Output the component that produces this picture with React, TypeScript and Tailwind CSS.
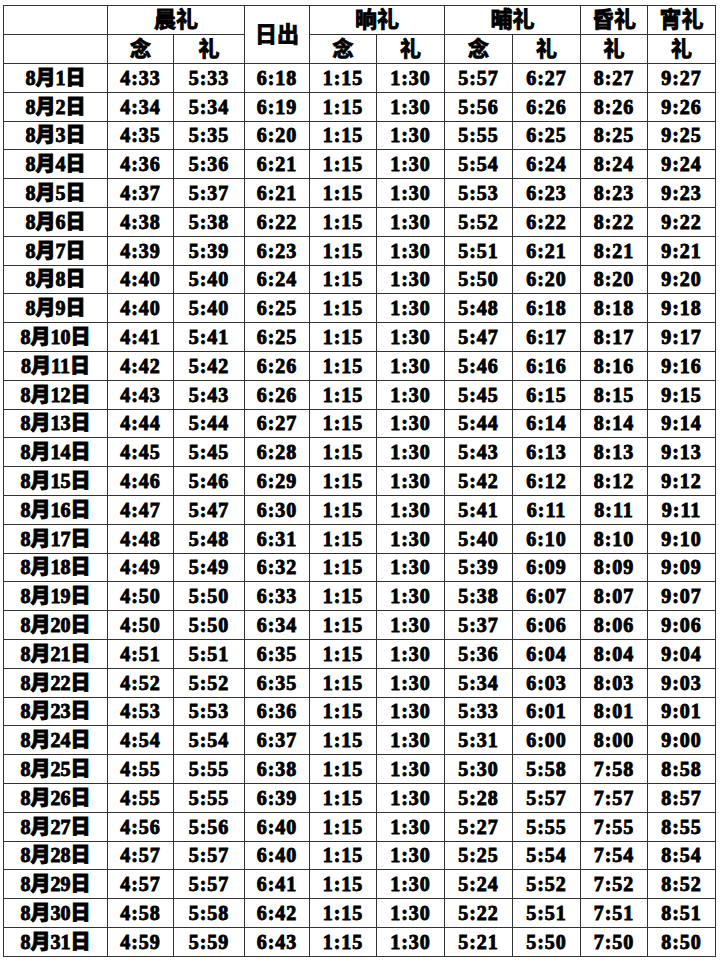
const rows: string[][] = [
  ["4:33", "5:33", "6:18", "5:57", "6:27", "8:27", "9:27"],
  ["4:34", "5:34", "6:19", "5:56", "6:26", "8:26", "9:26"],
  ["4:35", "5:35", "6:20", "5:55", "6:25", "8:25", "9:25"],
  ["4:36", "5:36", "6:21", "5:54", "6:24", "8:24", "9:24"],
  ["4:37", "5:37", "6:21", "5:53", "6:23", "8:23", "9:23"],
  ["4:38", "5:38", "6:22", "5:52", "6:22", "8:22", "9:22"],
  ["4:39", "5:39", "6:23", "5:51", "6:21", "8:21", "9:21"],
  ["4:40", "5:40", "6:24", "5:50", "6:20", "8:20", "9:20"],
  ["4:40", "5:40", "6:25", "5:48", "6:18", "8:18", "9:18"],
  ["4:41", "5:41", "6:25", "5:47", "6:17", "8:17", "9:17"],
  ["4:42", "5:42", "6:26", "5:46", "6:16", "8:16", "9:16"],
  ["4:43", "5:43", "6:26", "5:45", "6:15", "8:15", "9:15"],
  ["4:44", "5:44", "6:27", "5:44", "6:14", "8:14", "9:14"],
  ["4:45", "5:45", "6:28", "5:43", "6:13", "8:13", "9:13"],
  ["4:46", "5:46", "6:29", "5:42", "6:12", "8:12", "9:12"],
  ["4:47", "5:47", "6:30", "5:41", "6:11", "8:11", "9:11"],
  ["4:48", "5:48", "6:31", "5:40", "6:10", "8:10", "9:10"],
  ["4:49", "5:49", "6:32", "5:39", "6:09", "8:09", "9:09"],
  ["4:50", "5:50", "6:33", "5:38", "6:07", "8:07", "9:07"],
  ["4:50", "5:50", "6:34", "5:37", "6:06", "8:06", "9:06"],
  ["4:51", "5:51", "6:35", "5:36", "6:04", "8:04", "9:04"],
  ["4:52", "5:52", "6:35", "5:34", "6:03", "8:03", "9:03"],
  ["4:53", "5:53", "6:36", "5:33", "6:01", "8:01", "9:01"],
  ["4:54", "5:54", "6:37", "5:31", "6:00", "8:00", "9:00"],
  ["4:55", "5:55", "6:38", "5:30", "5:58", "7:58", "8:58"],
  ["4:55", "5:55", "6:39", "5:28", "5:57", "7:57", "8:57"],
  ["4:56", "5:56", "6:40", "5:27", "5:55", "7:55", "8:55"],
  ["4:57", "5:57", "6:40", "5:25", "5:54", "7:54", "8:54"],
  ["4:57", "5:57", "6:41", "5:24", "5:52", "7:52", "8:52"],
  ["4:58", "5:58", "6:42", "5:22", "5:51", "7:51", "8:51"],
  ["4:59", "5:59", "6:43", "5:21", "5:50", "7:50", "8:50"],
];

// 晌礼 is the same every day
const noonNian = "1:15";
const noonLi = "1:30";

const cell = "border border-[#333] text-center align-middle p-0 leading-none";
const num = cell + " tracking-[1px]";

export default function App() {
  return (
    <div className="bg-white w-[720px] h-[967px] pt-[5px] pl-[3px] font-['Liberation_Serif','Noto_Sans_CJK_SC',serif] font-bold text-black [-webkit-text-stroke:0.9px_black]">
      <table className="table-fixed border-collapse w-[712px]">
        <colgroup>
          <col className="w-[104px]" />
          <col className="w-[66px]" />
          <col className="w-[71px]" />
          <col className="w-[65px]" />
          <col className="w-[67px]" />
          <col className="w-[68px]" />
          <col className="w-[68px]" />
          <col className="w-[68px]" />
          <col className="w-[67px]" />
          <col className="w-[68px]" />
        </colgroup>
        <thead>
          <tr className="h-[29px] text-[22px] font-black">
            <th className={cell}></th>
            <th className={cell} colSpan={2}>晨礼</th>
            <th className={cell} rowSpan={2}>日出</th>
            <th className={cell} colSpan={2}>晌礼</th>
            <th className={cell} colSpan={2}>晡礼</th>
            <th className={cell}>昏礼</th>
            <th className={cell}>宵礼</th>
          </tr>
          <tr className="h-[29px] text-[21px] font-black">
            <th className={cell}></th>
            <th className={cell}>念</th>
            <th className={cell}>礼</th>
            <th className={cell}>念</th>
            <th className={cell}>礼</th>
            <th className={cell}>念</th>
            <th className={cell}>礼</th>
            <th className={cell}>礼</th>
            <th className={cell}>礼</th>
          </tr>
        </thead>
        <tbody className="text-[20px]">
          {rows.map((r, i) => (
            <tr key={i} className="h-[28.8px]">
              <td className={cell + " font-black"}>8月{i + 1}日</td>
              <td className={num}>{r[0]}</td>
              <td className={num}>{r[1]}</td>
              <td className={num}>{r[2]}</td>
              <td className={num}>{noonNian}</td>
              <td className={num}>{noonLi}</td>
              <td className={num}>{r[3]}</td>
              <td className={num}>{r[4]}</td>
              <td className={num}>{r[5]}</td>
              <td className={num}>{r[6]}</td>
            </tr>
          ))}
        </tbody>
      </table>
    </div>
  );
}
